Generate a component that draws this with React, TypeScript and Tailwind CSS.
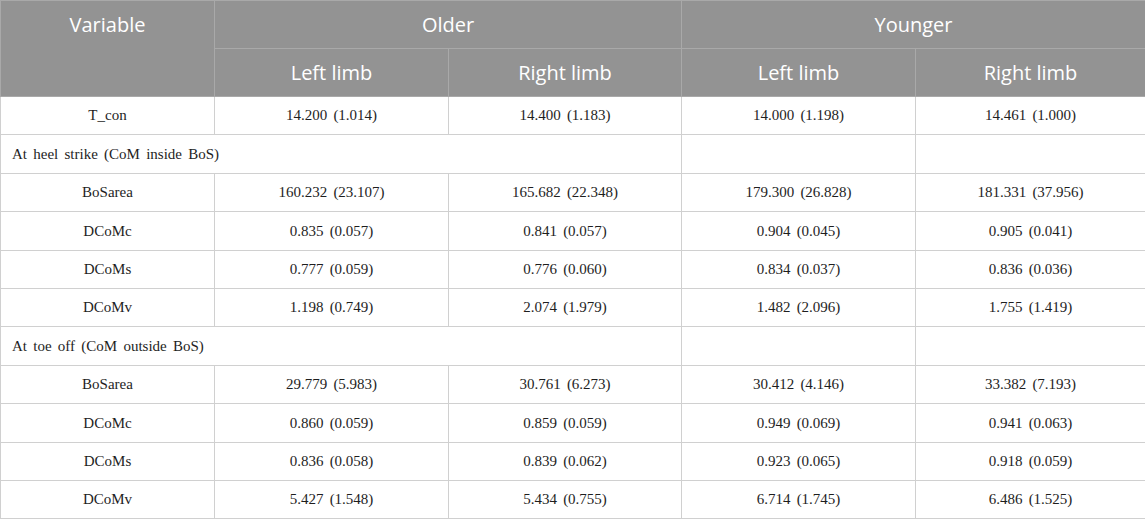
import React from "react";

type Row =
  | { kind: "data"; name: string; vals: string[] }
  | { kind: "section"; label: string };

const rows: Row[] = [
  { kind: "data", name: "T_con", vals: ["14.200 (1.014)", "14.400 (1.183)", "14.000 (1.198)", "14.461 (1.000)"] },
  { kind: "section", label: "At heel strike (CoM inside BoS)" },
  { kind: "data", name: "BoSarea", vals: ["160.232 (23.107)", "165.682 (22.348)", "179.300 (26.828)", "181.331 (37.956)"] },
  { kind: "data", name: "DCoMc", vals: ["0.835 (0.057)", "0.841 (0.057)", "0.904 (0.045)", "0.905 (0.041)"] },
  { kind: "data", name: "DCoMs", vals: ["0.777 (0.059)", "0.776 (0.060)", "0.834 (0.037)", "0.836 (0.036)"] },
  { kind: "data", name: "DCoMv", vals: ["1.198 (0.749)", "2.074 (1.979)", "1.482 (2.096)", "1.755 (1.419)"] },
  { kind: "section", label: "At toe off (CoM outside BoS)" },
  { kind: "data", name: "BoSarea", vals: ["29.779 (5.983)", "30.761 (6.273)", "30.412 (4.146)", "33.382 (7.193)"] },
  { kind: "data", name: "DCoMc", vals: ["0.860 (0.059)", "0.859 (0.059)", "0.949 (0.069)", "0.941 (0.063)"] },
  { kind: "data", name: "DCoMs", vals: ["0.836 (0.058)", "0.839 (0.062)", "0.923 (0.065)", "0.918 (0.059)"] },
  { kind: "data", name: "DCoMv", vals: ["5.427 (1.548)", "5.434 (0.755)", "6.714 (1.745)", "6.486 (1.525)"] },
];

const th = "border border-[#a9a9a9] font-normal text-white text-[20px] [font-family:'Open_Sans',sans-serif]";
const td = "border border-[#d0d0d0] text-[15px] [word-spacing:2.5px] text-[#1e1e1e] [font-family:'Liberation_Serif',serif]";

export default function App() {
  return (
    <div className="w-[1145px] bg-white">
      <table className="w-[1145px] table-fixed border-collapse">
        <colgroup>
          <col className="w-[214px]" />
          <col className="w-[234px]" />
          <col className="w-[233px]" />
          <col className="w-[234px]" />
          <col className="w-[230px]" />
        </colgroup>
        <thead className="bg-[#939393]">
          <tr className="h-[48px]">
            <th rowSpan={2} className={`${th} align-top pt-[9px]`}>Variable</th>
            <th colSpan={2} className={th}>Older</th>
            <th colSpan={2} className={th}>Younger</th>
          </tr>
          <tr className="h-[48px]">
            <th className={th}>Left limb</th>
            <th className={th}>Right limb</th>
            <th className={th}>Left limb</th>
            <th className={th}>Right limb</th>
          </tr>
        </thead>
        <tbody>
          {rows.map((r, i) =>
            r.kind === "data" ? (
              <tr key={i} className="h-[38.4px]">
                <td className={`${td} text-center`}>{r.name}</td>
                {r.vals.map((v, j) => (
                  <td key={j} className={`${td} text-center`}>{v}</td>
                ))}
              </tr>
            ) : (
              <tr key={i} className="h-[38.4px]">
                <td colSpan={3} className={`${td} text-left pl-[11px]`}>{r.label}</td>
                <td className={td}></td>
                <td className={td}></td>
              </tr>
            )
          )}
        </tbody>
      </table>
    </div>
  );
}
